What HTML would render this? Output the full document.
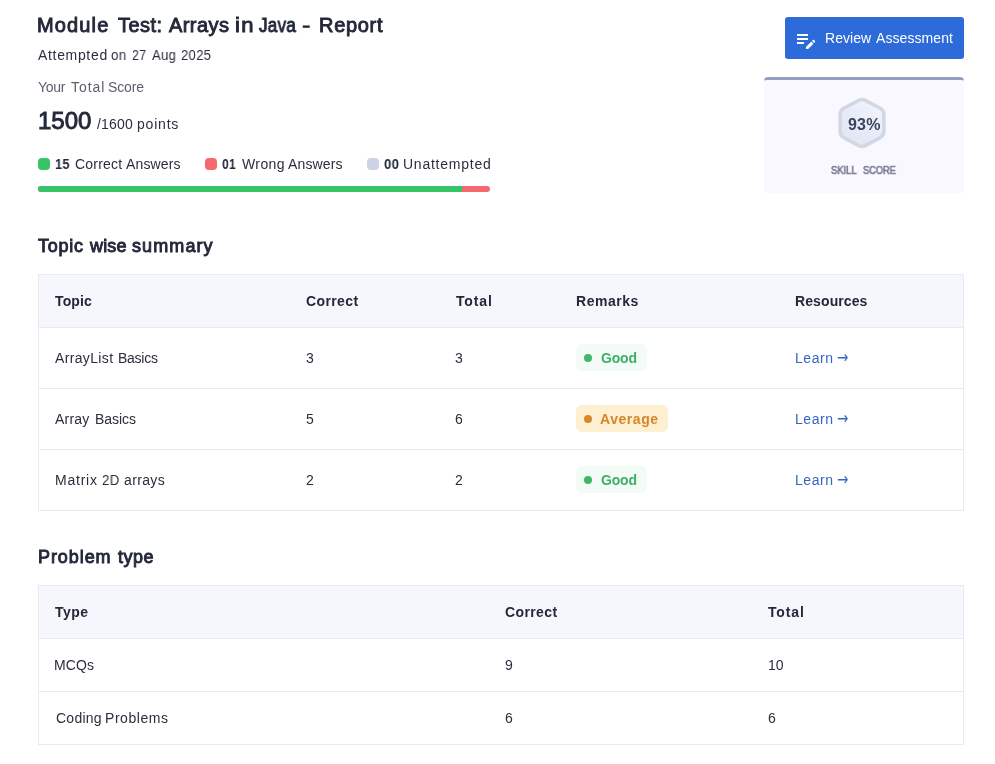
<!DOCTYPE html>
<html lang="en">
<head>
<meta charset="utf-8">
<title>Module Test: Arrays in Java – Report</title>
<style>
*{box-sizing:border-box;margin:0;padding:0}
html,body{width:995px;height:764px;background:#fff;overflow:hidden}
body{font-family:"Liberation Sans","DejaVu Sans",sans-serif;color:#23283a;position:relative}
.t{will-change:transform;position:absolute;white-space:nowrap;line-height:1;color:#2b2f3d}
.b{font-weight:700;color:#23283a}
.t b{font-weight:700;color:#23283a}
.g{color:#5b5f6b}
.w{color:#fff}
.lnk{color:#3466c2}
.gd{color:#3fae68;font-weight:700}
.av{color:#d4862a;font-weight:700}
.sk{color:#7b8096;font-weight:400;-webkit-text-stroke:0.7px #7b8096}
.pc{color:#3b435e;font-weight:700}
.sq{position:absolute;top:158px;width:12px;height:12px;border-radius:4px}
.bar{position:absolute;left:38px;top:186px;width:452px;height:6px;border-radius:3px;background:#f4686e;overflow:hidden}
.bar i{display:block;width:424px;height:6px;background:#36c468}
.btn{position:absolute;left:785px;top:17px;width:179px;height:42px;border-radius:3px;background:#2c6bd9}
.card{position:absolute;left:764px;top:77px;width:200px;height:116px;background:#f8f8fe;border-top:3px solid #969ec0;border-radius:4px 4px 2px 2px}
.tbl{position:absolute;left:38px;width:926px;border:1px solid #e9ebf2;background:#fff}
.th{position:absolute;left:39px;width:924px;height:52px;background:#f6f7fc}
.ln{position:absolute;left:39px;width:924px;height:1px;background:#e9ebf2}
.pill{position:absolute;left:576px;height:27px;border-radius:6px}
.pill i{position:absolute;left:8px;top:10px;width:8px;height:8px;border-radius:50%}
.good{background:#f2fbf6;width:71px}
.good i{background:#3fb86c}
.avg{background:#feefd0;width:92px}
.avg i{background:#d9862b}
.ar{font-family:"DejaVu Sans",sans-serif}
.grp{position:absolute;left:0;top:0}
.sb{font-weight:400;color:#23283a;-webkit-text-stroke:0.9px #23283a}
</style>
</head>
<body>
<div class="grp"><div id="tw0" class="t sb" style="left:37px;top:15px;font-size:20px;letter-spacing:1.14px;">Module</div> <div id="tw1" class="t sb" style="left:118px;top:15px;font-size:20px;letter-spacing:0.45px;">Test:</div> <div id="tw2" class="t sb" style="left:169px;top:15px;font-size:20px;letter-spacing:0.42px;">Arrays</div> <div id="tw3" class="t sb" style="left:235px;top:15px;font-size:20px;letter-spacing:1.2px;transform:scaleX(1.1);transform-origin:0 50%;">in</div> <div id="tw4" class="t sb" style="left:259px;top:15px;font-size:20px;letter-spacing:0.3px;transform:scaleX(0.853);transform-origin:0 50%;">Java</div> <div id="tw5" class="t sb" style="left:303px;top:15px;font-size:20px;transform:scaleX(0.58);transform-origin:0 50%;">–</div> <div id="tw6" class="t sb" style="left:319px;top:15px;font-size:20px;letter-spacing:0.7px;">Report</div></div>
<div class="grp"><div id="sub_0" class="t" style="left:38px;top:48px;font-size:14px;letter-spacing:0.67px;">Attempted</div> <div id="sub_1" class="t" style="left:111px;top:48px;font-size:14px;letter-spacing:0.42px;transform:scaleX(0.95);transform-origin:0 50%;">on</div> <div id="sub_2" class="t" style="left:132px;top:48px;font-size:14px;letter-spacing:0.32px;transform:scaleX(0.89);transform-origin:0 50%;">27</div> <div id="sub_3" class="t" style="left:152px;top:48px;font-size:14px;letter-spacing:0.32px;transform:scaleX(0.933);transform-origin:0 50%;">Aug</div> <div id="sub_4" class="t" style="left:181px;top:48px;font-size:14px;letter-spacing:0.32px;transform:scaleX(0.935);transform-origin:0 50%;">2025</div></div>
<div class="grp"><div id="lbl_0" class="t g" style="left:38px;top:80px;font-size:14px;letter-spacing:-0.27px;">Your</div> <div id="lbl_1" class="t g" style="left:71px;top:80px;font-size:14px;letter-spacing:0.97px;">Total</div> <div id="lbl_2" class="t g" style="left:108px;top:80px;font-size:14px;letter-spacing:-0.13px;">Score</div></div>
<div id="score" class="t sb" style="left:38px;top:109px;font-size:24px;">1500</div>
<div class="grp"><div id="pts_0" class="t" style="left:97px;top:117px;font-size:14px;letter-spacing:0.18px;">/1600</div> <div id="pts_1" class="t" style="left:137px;top:117px;font-size:14px;letter-spacing:0.8px;">points</div></div>
<div class="sq" style="left:38px;background:#36c468"></div>
<div class="grp"><div id="leg1_0" class="t b" style="left:55px;top:157px;font-size:14px;letter-spacing:0.24px;transform:scaleX(0.919);transform-origin:0 50%;">15</div> <div id="leg1_1" class="t" style="left:75px;top:157px;font-size:14px;letter-spacing:0.19px;">Correct</div> <div id="leg1_2" class="t" style="left:126px;top:157px;font-size:14px;letter-spacing:0.15px;">Answers</div></div>
<div class="sq" style="left:205px;background:#f4686e"></div>
<div class="grp"><div id="leg2_0" class="t b" style="left:222px;top:157px;font-size:14px;letter-spacing:0.28px;transform:scaleX(0.87);transform-origin:0 50%;">01</div> <div id="leg2_1" class="t" style="left:242px;top:157px;font-size:14px;letter-spacing:0.38px;">Wrong</div> <div id="leg2_2" class="t" style="left:288px;top:157px;font-size:14px;letter-spacing:0.13px;">Answers</div></div>
<div class="sq" style="left:367px;background:#ccd3e3"></div>
<div class="grp"><div id="leg3_0" class="t b" style="left:384px;top:157px;font-size:14px;letter-spacing:0.57px;transform:scaleX(0.932);transform-origin:0 50%;">00</div> <div id="leg3_1" class="t" style="left:403px;top:157px;font-size:14px;letter-spacing:0.76px;">Unattempted</div></div>
<div class="bar"><i></i></div>

<div class="btn">
<svg style="position:absolute;left:9px;top:11px" width="24" height="24" viewBox="0 0 24 24"><path fill="#fff" d="M3 10h11v2H3v-2zm0-2h11V6H3v2zm0 8h7v-2H3v2zm15.01-3.13l.71-.71c.39-.39 1.02-.39 1.41 0l.71.71c.39.39.39 1.02 0 1.41l-.71.71-2.12-2.12zm-.71.71l-5.3 5.3V21h2.12l5.3-5.3-2.12-2.12z"/></svg>
</div>
<div class="grp"><div id="btnt_0" class="t w" style="left:825px;top:31px;font-size:14px;letter-spacing:0.03px;">Review</div> <div id="btnt_1" class="t w" style="left:876px;top:31px;font-size:14px;letter-spacing:0.07px;">Assessment</div></div>

<div class="card"></div>
<svg style="position:absolute;left:835.4px;top:95px" width="54" height="56" viewBox="0 0 54 56">
<defs><linearGradient id="hg" x1="0.8" y1="0.1" x2="0.2" y2="0.9"><stop offset="0" stop-color="#f1f4fc"/><stop offset="0.5" stop-color="#e8ecf8"/><stop offset="1" stop-color="#e2e6f1"/></linearGradient></defs>
<path d="M23.75 5.41 A7 7 0 0 1 30.25 5.41 L45.15 13.23 A7 7 0 0 1 48.90 19.43 L48.90 36.57 A7 7 0 0 1 45.15 42.77 L30.25 50.59 A7 7 0 0 1 23.75 50.59 L8.85 42.77 A7 7 0 0 1 5.10 36.57 L5.10 19.43 A7 7 0 0 1 8.85 13.23 Z" fill="url(#hg)" stroke="#d2d7e4" stroke-width="3.5"/>
</svg>
<div id="pct" class="t pc" style="left:848px;top:117px;font-size:16px;letter-spacing:0.2px;">93%</div>
<div class="grp"><div id="skill_0" class="t sk" style="left:831px;top:166px;font-size:10px;transform:scaleX(0.94);transform-origin:0 50%;">SKILL</div> <div id="skill_1" class="t sk" style="left:863px;top:166px;font-size:10px;transform:scaleX(0.92);transform-origin:0 50%;">SCORE</div></div>

<div class="grp"><div id="h2a_0" class="t sb" style="left:38px;top:237px;font-size:18px;letter-spacing:0.74px;">Topic</div> <div id="h2a_1" class="t sb" style="left:90px;top:237px;font-size:18px;letter-spacing:0.16px;">wise</div> <div id="h2a_2" class="t sb" style="left:132px;top:237px;font-size:18px;letter-spacing:1.1px;">summary</div></div>
<div class="tbl" style="top:274px;height:237px"></div>
<div class="th" style="top:275px"></div>
<div class="ln" style="top:327px"></div>
<div class="ln" style="top:388px"></div>
<div class="ln" style="top:449px"></div>
<div id="thTopic" class="t b" style="left:55px;top:294px;font-size:14px;letter-spacing:0.12px;">Topic</div>
<div id="thCorrect" class="t b" style="left:306px;top:294px;font-size:14px;letter-spacing:0.38px;">Correct</div>
<div id="thTotal" class="t b" style="left:456px;top:294px;font-size:14px;letter-spacing:0.85px;">Total</div>
<div id="thRemarks" class="t b" style="left:576px;top:294px;font-size:14px;letter-spacing:0.53px;">Remarks</div>
<div id="thResources" class="t b" style="left:795px;top:294px;font-size:14px;letter-spacing:0.09999999999999999px;">Resources</div>
<div class="grp"><div id="r1a_0" class="t" style="left:55px;top:351px;font-size:14px;letter-spacing:0.35px;">ArrayList</div> <div id="r1a_1" class="t" style="left:118px;top:351px;font-size:14px;letter-spacing:-0.25px;">Basics</div></div>
<div id="r1b" class="t" style="left:306px;top:351px;font-size:14px;">3</div>
<div id="r1c" class="t" style="left:455px;top:351px;font-size:14px;">3</div>
<div class="pill good" style="top:344px"><i></i></div>
<div id="r1d" class="t gd" style="left:601px;top:351px;font-size:14px;letter-spacing:-0.17px;">Good</div>
<div id="r1e" class="t lnk" style="left:795px;top:351px;font-size:14px;letter-spacing:0.57px;">Learn</div>
<div id="r1f" class="t lnk ar" style="left:837px;top:349px;font-size:17px;transform:scaleX(0.8);transform-origin:0 50%;">→</div>
<div class="grp"><div id="r2a_0" class="t" style="left:55px;top:412px;font-size:14px;letter-spacing:0.21px;">Array</div> <div id="r2a_1" class="t" style="left:95px;top:412px;font-size:14px;letter-spacing:-0.07px;">Basics</div></div>
<div id="r2b" class="t" style="left:306px;top:412px;font-size:14px;">5</div>
<div id="r2c" class="t" style="left:455px;top:412px;font-size:14px;">6</div>
<div class="pill avg" style="top:405px"><i></i></div>
<div id="r2d" class="t av" style="left:600px;top:412px;font-size:14px;letter-spacing:0.55px;">Average</div>
<div id="r2e" class="t lnk" style="left:795px;top:412px;font-size:14px;letter-spacing:0.57px;">Learn</div>
<div id="r2f" class="t lnk ar" style="left:837px;top:410px;font-size:17px;transform:scaleX(0.8);transform-origin:0 50%;">→</div>
<div class="grp"><div id="r3a_0" class="t" style="left:55px;top:473px;font-size:14px;letter-spacing:0.77px;">Matrix</div> <div id="r3a_1" class="t" style="left:102px;top:473px;font-size:14px;letter-spacing:0.45px;transform:scaleX(0.944);transform-origin:0 50%;">2D</div> <div id="r3a_2" class="t" style="left:124px;top:473px;font-size:14px;letter-spacing:0.35px;">arrays</div></div>
<div id="r3b" class="t" style="left:306px;top:473px;font-size:14px;">2</div>
<div id="r3c" class="t" style="left:455px;top:473px;font-size:14px;">2</div>
<div class="pill good" style="top:466px"><i></i></div>
<div id="r3d" class="t gd" style="left:601px;top:473px;font-size:14px;letter-spacing:-0.17px;">Good</div>
<div id="r3e" class="t lnk" style="left:795px;top:473px;font-size:14px;letter-spacing:0.57px;">Learn</div>
<div id="r3f" class="t lnk ar" style="left:837px;top:471px;font-size:17px;transform:scaleX(0.8);transform-origin:0 50%;">→</div>

<div class="grp"><div id="h2b_0" class="t sb" style="left:38px;top:548px;font-size:18px;letter-spacing:0.93px;">Problem</div> <div id="h2b_1" class="t sb" style="left:118px;top:548px;font-size:18px;letter-spacing:0.5px;">type</div></div>
<div class="tbl" style="top:585px;height:160px"></div>
<div class="th" style="top:586px"></div>
<div class="ln" style="top:638px"></div>
<div class="ln" style="top:691px"></div>
<div id="th2Type" class="t b" style="left:55px;top:605px;font-size:14px;letter-spacing:0.43px;">Type</div>
<div id="th2Correct" class="t b" style="left:505px;top:605px;font-size:14px;letter-spacing:0.38px;">Correct</div>
<div id="th2Total" class="t b" style="left:768px;top:605px;font-size:14px;letter-spacing:0.85px;">Total</div>
<div id="p1a" class="t" style="left:54px;top:658px;font-size:14px;letter-spacing:0.1px;">MCQs</div>
<div id="p1b" class="t" style="left:505px;top:658px;font-size:14px;">9</div>
<div id="p1c" class="t" style="left:768px;top:658px;font-size:14px;">10</div>
<div class="grp"><div id="p2a_0" class="t" style="left:56px;top:711px;font-size:14px;letter-spacing:0.25px;">Coding</div> <div id="p2a_1" class="t" style="left:105px;top:711px;font-size:14px;letter-spacing:0.56px;">Problems</div></div>
<div id="p2b" class="t" style="left:505px;top:711px;font-size:14px;">6</div>
<div id="p2c" class="t" style="left:768px;top:711px;font-size:14px;">6</div>
</body>
</html>
